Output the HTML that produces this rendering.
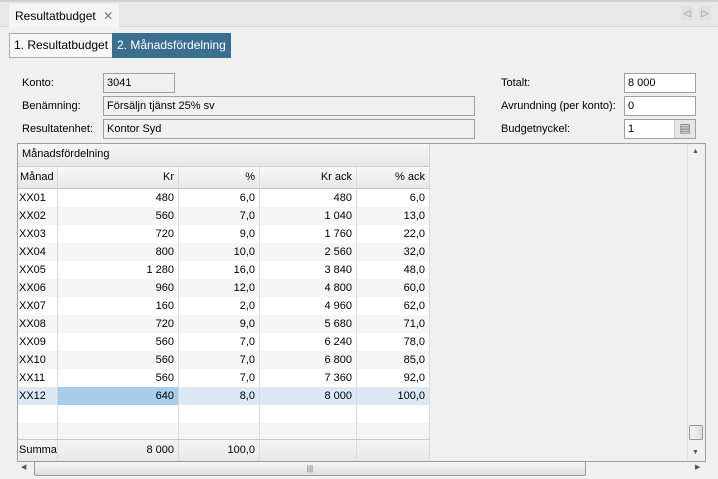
<!DOCTYPE html><html><head><style>
*{box-sizing:border-box;margin:0;padding:0}
body{width:718px;height:479px;background:#f0f0f0;font-family:"Liberation Sans",sans-serif;font-size:11px;color:#000;position:relative;overflow:hidden}
.a{position:absolute}
.f{position:absolute;border:1px solid #a0a0a0;background:#f0f0f0;padding:1px 0 0 3px;height:20px;line-height:17px}
.w{background:#fff}
.row{position:absolute;left:18px;width:412px;height:18px;line-height:18px}
.c{position:absolute;top:0;height:100%;text-align:right;padding-right:4px;border-right:1px solid #dadada}
</style></head><body>
<div class="a" style="left:0;top:0;width:718px;height:2px;background:#d0d0d0"></div>
<div class="a" style="left:0;top:26px;width:718px;height:1px;background:#d6d6d6"></div>
<div class="a" style="left:0;top:2px;width:718px;height:24px;background:#e8e8e8"></div>
<div class="a" style="left:9px;top:4px;width:110px;height:23px;background:#f5f5f5;padding:5px 0 0 6px;font-size:12px">Resultatbudget <span style="color:#777;margin-left:4px">✕</span></div>
<div class="a" style="left:681px;top:6px;width:12px;height:14px;background:#e0e0e0;color:#888;font-size:9px;text-align:center;line-height:14px">◁</div>
<div class="a" style="left:699px;top:6px;width:12px;height:14px;background:#e0e0e0;color:#888;font-size:9px;text-align:center;line-height:14px">▷</div>
<div class="a" style="left:9px;top:33px;width:104px;height:25px;border:1px solid #aaa;background:#f7f7f7;line-height:23px;padding-left:4px;font-size:12px">1. Resultatbudget</div>
<div class="a" style="left:112px;top:33px;width:119px;height:25px;background:#3a6f90;color:#fff;line-height:25px;padding-left:5px;font-size:12px">2. Månadsfördelning</div>
<div class="a" style="left:22px;top:77px">Konto:</div>
<div class="a" style="left:22px;top:100px">Benämning:</div>
<div class="a" style="left:22px;top:123px">Resultatenhet:</div>
<div class="f" style="left:103px;top:73px;width:72px">3041</div>
<div class="f" style="left:103px;top:96px;width:372px">Försäljn tjänst 25% sv</div>
<div class="f" style="left:103px;top:119px;width:372px">Kontor Syd</div>
<div class="a" style="left:501px;top:77px">Totalt:</div>
<div class="a" style="left:501px;top:100px">Avrundning (per konto):</div>
<div class="a" style="left:501px;top:123px">Budgetnyckel:</div>
<div class="f w" style="left:624px;top:73px;width:72px">8 000</div>
<div class="f w" style="left:624px;top:96px;width:72px">0</div>
<div class="f w" style="left:624px;top:119px;width:72px">1<div class="a" style="right:0;top:0;width:21px;height:18px;background:#e6e6e6;border-left:1px solid #ccc;color:#666;text-align:center;line-height:17px;font-size:12px">▤</div></div>
<div class="a" style="left:17px;top:143px;width:689px;height:319px;border:1px solid #a0a0a0;background:#f0f0f0"></div>
<div class="a" style="left:18px;top:144px;width:412px;height:23px;background:linear-gradient(#f6f6f6,#e6e6e6);border-right:1px solid #d0d0d0;border-bottom:1px solid #d0d0d0;padding:4px 0 0 4px">Månadsfördelning</div>
<div class="a" style="left:18px;top:167px;width:412px;height:22px;background:linear-gradient(#f8f8f8,#e8e8e8);border-bottom:1px solid #c8c8c8;line-height:21px">
<div class="c" style="left:0;width:40px;text-align:left;padding-left:2px">Månad</div>
<div class="c" style="left:40px;width:121px">Kr</div>
<div class="c" style="left:161px;width:81px">%</div>
<div class="c" style="left:242px;width:97px">Kr ack</div>
<div class="c" style="left:339px;width:73px">% ack</div></div>
<div id="rows"></div>
<script>
var d=[["XX01",480,"6,0","480","6,0"],["XX02",560,"7,0","1 040","13,0"],["XX03",720,"9,0","1 760","22,0"],["XX04",800,"10,0","2 560","32,0"],["XX05","1 280","16,0","3 840","48,0"],["XX06",960,"12,0","4 800","60,0"],["XX07",160,"2,0","4 960","62,0"],["XX08",720,"9,0","5 680","71,0"],["XX09",560,"7,0","6 240","78,0"],["XX10",560,"7,0","6 800","85,0"],["XX11",560,"7,0","7 360","92,0"],["XX12",640,"8,0","8 000","100,0"],["","","","",""],["","","","",""]];
var h="";d.forEach(function(r,i){var bg=i==11?"#dce8f3":(i%2?"#f5f5f5":"#fff");var ht=i==13?16:18;
h+='<div class="row" style="top:'+(189+i*18)+'px;height:'+ht+'px;background:'+bg+'"><div class="c" style="left:0;width:40px;text-align:left;padding-left:1px">'+r[0]+'</div><div class="c" style="left:40px;width:121px;'+(i==11?'background:#a8cce9':'')+'">'+r[1]+'</div><div class="c" style="left:161px;width:81px">'+r[2]+'</div><div class="c" style="left:242px;width:97px">'+r[3]+'</div><div class="c" style="left:339px;width:73px">'+r[4]+'</div></div>';});
document.getElementById("rows").innerHTML=h;
</script>
<div class="row" style="top:439px;height:22px;line-height:21px;background:linear-gradient(#f4f4f4,#e8e8e8);border-top:1px solid #c8c8c8">
<div class="c" style="left:0;width:40px;text-align:left;padding-left:1px;overflow:hidden">Summa</div>
<div class="c" style="left:40px;width:121px">8 000</div>
<div class="c" style="left:161px;width:81px">100,0</div>
<div class="c" style="left:242px;width:97px"></div>
<div class="c" style="left:339px;width:73px"></div></div>
<div class="a" style="left:687px;top:144px;width:18px;height:317px;background:#f0f0f0;border-left:1px solid #e4e4e4"></div>
<div class="a" style="left:692px;top:148px;font-size:7px;color:#555">▲</div>
<div class="a" style="left:692px;top:449px;font-size:7px;color:#555">▼</div>
<div class="a" style="left:689px;top:425px;width:14px;height:15px;border:1px solid #999;border-radius:2px;background:linear-gradient(90deg,#f4f4f4,#ddd)"></div>
<div class="a" style="left:17px;top:462px;width:689px;height:15px;background:#f0f0f0"></div>
<div class="a" style="left:21px;top:463px;font-size:7px;color:#555">◀</div>
<div class="a" style="left:695px;top:463px;font-size:7px;color:#555">▶</div>
<div class="a" style="left:34px;top:461px;width:552px;height:15px;border:1px solid #999;border-radius:2px;background:linear-gradient(#f6f6f6,#dedede);text-align:center;font-size:8px;line-height:13px;color:#666">|||</div>
</body></html>
